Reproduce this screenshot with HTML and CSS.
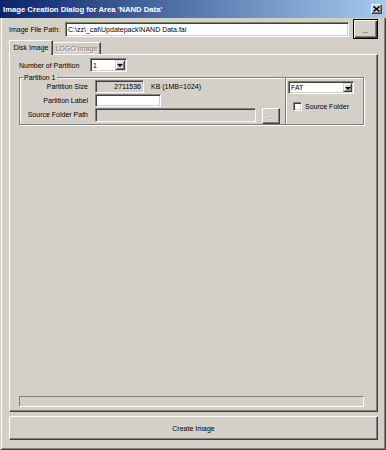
FILE: index.html
```html
<!DOCTYPE html>
<html lang="en">
<head>
    <meta charset="UTF-8">
    <meta name="viewport" content="width=device-width, initial-scale=1.0">
    <title>Image Creation Dialog</title>
    <link rel="stylesheet" href="styles.css">
</head>
<body>
    <div class="window">
        <div class="titlebar">
            <span class="title">Image Creation Dialog for Area 'NAND Data'</span>
            <span class="close-btn">
                <svg width="7" height="6" viewBox="0 0 7 6">
                    <path d="M0.5 0.5 L6.5 5.5 M6.5 0.5 L0.5 5.5" stroke="#000" stroke-width="1.5"/>
                </svg>
            </span>
        </div>
        <div class="client">
            <div class="path-row">
                <span class="path-label">Image File Path:</span>
                <div class="field path-field">C:\zz\_cat\Updatepack\NAND Data.fai</div>
                <button class="btn btn-default browse-btn">...</button>
            </div>
            <div class="tabs">
                <div class="tab active">Disk Image</div>
                <div class="tab disabled">LOGO Image</div>
            </div>
            <div class="tab-panel">
                <div class="count-row">
                    <span class="count-label">Number of Partition</span>
                    <div class="combo count-combo">
                        <span class="combo-value">1</span>
                        <span class="combo-arrow"></span>
                    </div>
                </div>
                <div class="groupbox">
                    <span class="legend">Partition 1</span>
                    <div class="group-main">
                        <div class="form-row">
                            <span class="row-label">Partition Size</span>
                            <div class="field disabled size-field">2711536</div>
                            <span class="unit">KB (1MB=1024)</span>
                        </div>
                        <div class="form-row">
                            <span class="row-label">Partition Label</span>
                            <div class="field label-field"></div>
                        </div>
                        <div class="form-row last">
                            <span class="row-label">Source Folder Path</span>
                            <div class="field disabled folder-field"></div>
                            <button class="btn btn-disabled folder-btn">...</button>
                        </div>
                    </div>
                    <div class="group-side">
                        <div class="combo fs-combo">
                            <span class="combo-value">FAT</span>
                            <span class="combo-arrow"></span>
                        </div>
                        <div class="check">
                            <span class="check-box"></span>
                            <span>Source Folder</span>
                        </div>
                    </div>
                </div>
                <div class="panel-fill"></div>
                <div class="progress"></div>
            </div>
            <button class="btn create-btn">Create Image</button>
        </div>
    </div>
</body>
</html>
```

FILE: styles.css
```css
/* Reset */
* {
    margin: 0;
    padding: 0;
    box-sizing: border-box;
}

/* Classic dialog colors */
:root {
    --face: #d4d0c8;
    --light: #ffffff;
    --shadow: #808080;
    --dark: #404040;
    --title-start: #0a246a;
    --title-end: #a6caf0;
}

body {
    font-family: "Liberation Sans", Arial, sans-serif;
    font-size: 7px;
    color: #000;
    background: var(--face);
}

.window {
    width: 386px;
    height: 450px;
    display: flex;
    flex-direction: column;
    background: var(--face);
}

/* Title bar */
.titlebar {
    flex: none;
    height: 18px;
    display: flex;
    align-items: center;
    padding: 0 4px 0 3px;
    background: linear-gradient(to right, var(--title-start), var(--title-end));
    color: #fff;
    font-weight: bold;
    font-size: 7.7px;
}

.close-btn {
    margin-left: auto;
    width: 11px;
    height: 10px;
    display: flex;
    align-items: center;
    justify-content: center;
    background: var(--face);
    border: 1px solid;
    border-color: var(--light) var(--dark) var(--dark) var(--light);
    box-shadow: inset -1px -1px var(--shadow);
}

/* Client area */
.client {
    flex: 1;
    display: flex;
    flex-direction: column;
    padding: 1px 7px 9px 8px;
    border-left: 1px solid var(--face);
    border-right: 1px solid var(--dark);
    border-bottom: 1px solid var(--dark);
    box-shadow: inset 1px 0 var(--light), inset -1px -1px var(--shadow);
}

/* 3D controls */
.field {
    height: 13px;
    display: flex;
    align-items: center;
    padding: 0 2px;
    background: #fff;
    border: 1px solid;
    border-color: var(--shadow) var(--light) var(--light) var(--shadow);
    box-shadow: inset 1px 1px var(--dark), inset -1px -1px var(--face);
    white-space: nowrap;
    overflow: hidden;
}

.field.disabled {
    background: var(--face);
}

.btn {
    display: flex;
    align-items: center;
    justify-content: center;
    font: inherit;
    color: #000;
    background: var(--face);
    border: 1px solid;
    border-color: var(--light) var(--dark) var(--dark) var(--light);
    box-shadow: inset -1px -1px var(--shadow);
}

.btn-default {
    border-color: #000;
    box-shadow: inset 1px 1px var(--light), inset -1px -1px var(--dark), inset -2px -2px var(--shadow);
}

.btn-disabled {
    color: var(--shadow);
    text-shadow: 1px 1px var(--light);
}

.combo {
    display: flex;
    padding: 1px;
    background: #fff;
    border: 1px solid;
    border-color: var(--shadow) var(--light) var(--light) var(--shadow);
    box-shadow: inset 1px 1px var(--dark), inset -1px -1px var(--face);
}

.combo-value {
    flex: 1;
    display: flex;
    align-items: center;
    padding-left: 1px;
}

.combo-arrow {
    width: 10px;
    display: flex;
    align-items: center;
    justify-content: center;
    background: var(--face);
    border: 1px solid;
    border-color: var(--face) var(--dark) var(--dark) var(--face);
    box-shadow: inset 1px 1px var(--light), inset -1px -1px var(--shadow);
}

.combo-arrow::after {
    content: "";
    border-top: 3px solid #000;
    border-left: 3px solid transparent;
    border-right: 3px solid transparent;
    margin-top: 1px;
}

/* Path row */
.path-row {
    height: 20px;
    display: flex;
    align-items: center;
}

.path-label {
    width: 56px;
}

.path-field {
    flex: 1;
    height: 15px;
}

.browse-btn {
    width: 25px;
    height: 20px;
    margin-left: 4px;
    padding-top: 2px;
}

/* Tabs */
.tabs {
    height: 14px;
    margin-top: 1px;
    display: flex;
    align-items: flex-end;
    position: relative;
    z-index: 1;
}

.tab {
    height: 12px;
    display: flex;
    align-items: center;
    justify-content: center;
    background: var(--face);
    border-top: 1px solid var(--light);
    border-left: 1px solid var(--light);
    border-right: 1px solid var(--dark);
    box-shadow: inset -1px 0 var(--shadow);
}

.tab.active {
    width: 44px;
    height: 15px;
    margin-bottom: -1px;
    padding-bottom: 2px;
}

.tab.disabled {
    width: 48px;
    border-left: none;
    color: var(--shadow);
    text-shadow: 1px 1px var(--light);
}

.tab-panel {
    flex: 1;
    min-height: 0;
    display: flex;
    flex-direction: column;
    padding: 3px 13px 4px 9px;
    border: 1px solid;
    border-color: var(--light) var(--dark) var(--dark) var(--light);
    box-shadow: inset -1px -1px var(--shadow);
}

.count-row {
    height: 14px;
    display: flex;
    align-items: center;
}

.count-label {
    width: 71px;
}

.count-combo {
    width: 37px;
    height: 14px;
}

/* Partition group */
.groupbox {
    position: relative;
    height: 48px;
    margin-top: 5px;
    display: flex;
    border: 1px solid var(--shadow);
    box-shadow: inset 1px 1px var(--light), 1px 1px var(--light);
}

.legend {
    position: absolute;
    top: -5px;
    left: 3px;
    padding: 0 1px;
    line-height: 9px;
    background: var(--face);
}

.group-main {
    width: 265px;
    padding-top: 2px;
}

.form-row {
    height: 14px;
    display: flex;
    align-items: flex-start;
}

.form-row.last {
    height: 16px;
}

.row-label {
    width: 68px;
    height: 13px;
    margin-right: 7px;
    display: flex;
    align-items: center;
    justify-content: flex-end;
}

.size-field {
    width: 49px;
    justify-content: flex-end;
}

.unit {
    height: 13px;
    display: flex;
    align-items: center;
    margin-left: 7px;
}

.label-field {
    width: 66px;
}

.folder-field {
    width: 161px;
    height: 14px;
}

.folder-btn {
    width: 18px;
    height: 16px;
    margin-left: 6px;
}

.group-side {
    flex: 1;
    padding: 3px 0 0 2px;
    border-left: 1px solid var(--shadow);
    box-shadow: inset 1px 0 var(--light);
}

.fs-combo {
    width: 66px;
    height: 13px;
}

.fs-combo .combo-arrow {
    width: 9px;
}

.check {
    display: flex;
    align-items: center;
    margin: 8px 0 0 5px;
}

.check-box {
    width: 9px;
    height: 9px;
    margin-right: 3px;
    background: #fff;
    border: 1px solid;
    border-color: var(--shadow) var(--light) var(--light) var(--shadow);
    box-shadow: inset 1px 1px var(--dark), inset -1px -1px var(--face);
}

.panel-fill {
    flex: 1;
}

.progress {
    height: 11px;
    border: 1px solid;
    border-color: var(--shadow) var(--light) var(--light) var(--shadow);
}

/* Bottom button */
.create-btn {
    flex: none;
    height: 24px;
    margin-top: 4px;
    border-color: var(--light) var(--dark) var(--dark) var(--light);
}
```
